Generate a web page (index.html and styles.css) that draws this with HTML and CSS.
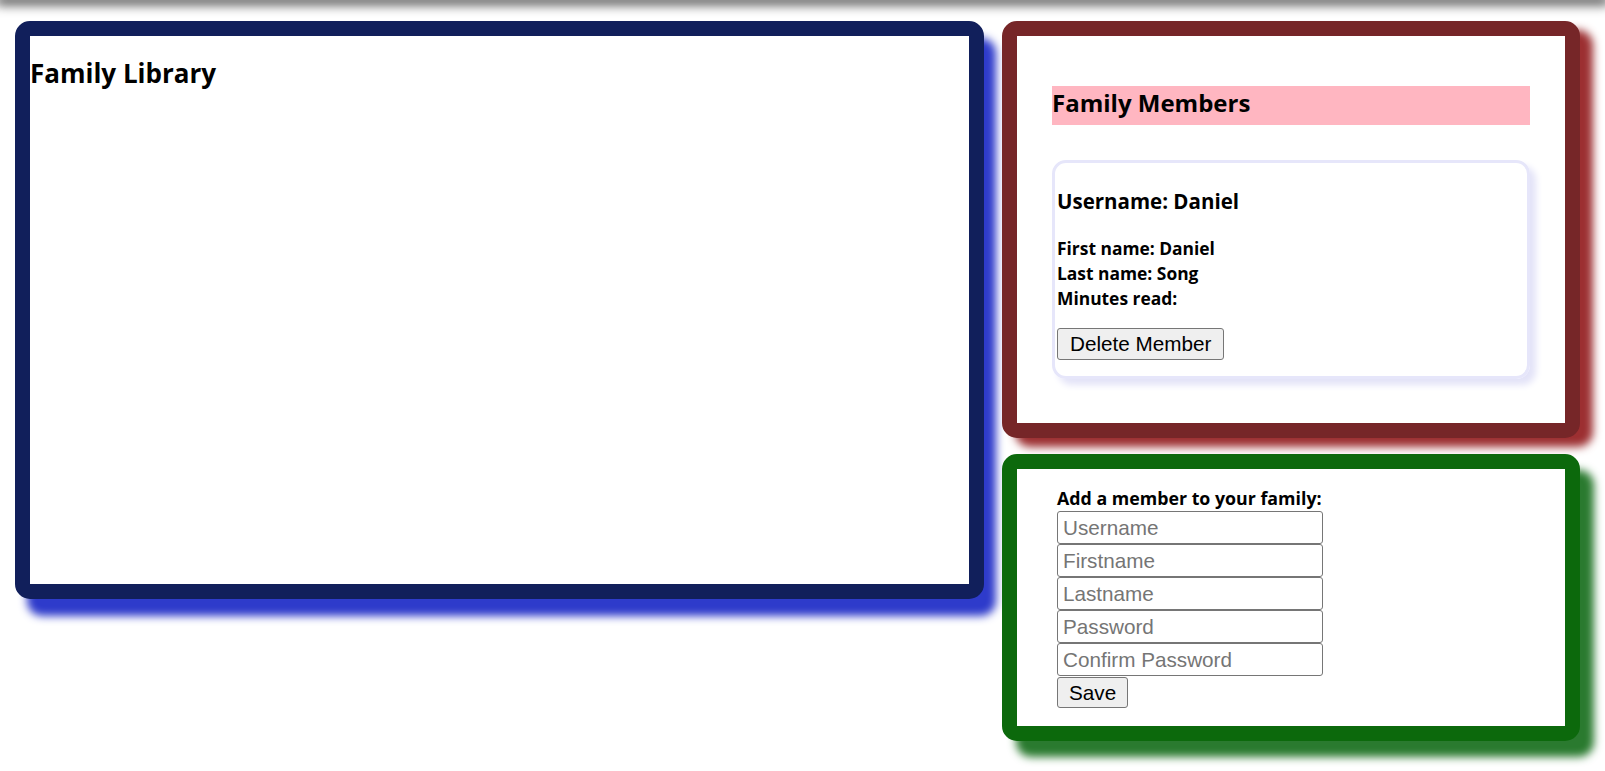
FILE: index.html
```html
<!DOCTYPE html>
<html lang="en">
<head>
<meta charset="utf-8">
<title>Family Library</title>
<link rel="stylesheet" href="styles.css">
</head>
<body>
<div class="topbar"></div>
<main class="layout">
  <section class="panel library">
    <h2 class="library-title">Family Library</h2>
  </section>
  <div class="side">
    <section class="panel members">
      <h2 class="members-title">Family Members</h2>
      <div class="member-card">
        <h3 class="member-username">Username: Daniel</h3>
        <p class="member-details">First name: Daniel<br>Last name: Song<br>Minutes read:</p>
        <button class="btn" type="button">Delete Member</button>
      </div>
    </section>
    <section class="panel add">
      <form class="add-form">
        <label class="add-label">Add a member to your family:</label>
        <input class="field" type="text" placeholder="Username">
        <input class="field" type="text" placeholder="Firstname">
        <input class="field" type="text" placeholder="Lastname">
        <input class="field" type="password" placeholder="Password">
        <input class="field" type="password" placeholder="Confirm Password">
        <button class="btn save" type="button">Save</button>
      </form>
    </section>
  </div>
</main>
</body>
</html>
```

FILE: styles.css
```css
* { box-sizing: border-box; }

html, body {
  min-height: 100vh;
}

body {
  margin: 0;
  background: #ffffff;
  font-family: "Open Sans", "Noto Sans", sans-serif;
  color: #000;
}

.topbar {
  height: 0;
  box-shadow: 0 0 12px 4px rgba(0, 0, 0, 0.85);
}

.layout {
  display: grid;
  grid-template-columns: 969px 578px;
  column-gap: 18px;
  align-items: start;
  padding: 21px 0 29px 15px;
}

.panel {
  border: 15px solid;
  border-radius: 15px;
  background: #fff;
}

.library {
  height: 578px;
  border-color: #111f5b;
  box-shadow: 12px 17px 8px #2e3bcb;
}

.library-title {
  margin: 20px 0 0;
  font-size: 26px;
  line-height: 34px;
  font-weight: 700;
}

.side {
  display: flex;
  flex-direction: column;
  gap: 16px;
}

.members {
  border-color: #762628;
  box-shadow: 13px 9px 8px #9c2f31;
  padding: 50px 35px 44px;
}

.members-title {
  margin: 0 0 35px;
  background: #ffb6c1;
  font-size: 24px;
  line-height: 34px;
  padding-bottom: 5px;
  font-weight: 700;
}

.member-card {
  border: 3px solid #e6e6fa;
  border-radius: 14px;
  box-shadow: 6px 6px 7px #e3e3f8;
  padding: 0 2px 16px;
}

.member-username {
  margin: 24px 0 0;
  font-size: 20.5px;
  line-height: 28px;
  font-weight: 700;
}

.member-details {
  margin: 21px 0 0;
  font-size: 17.4px;
  line-height: 25px;
  font-weight: 700;
}

.btn {
  display: block;
  margin-top: 17px;
  height: 32px;
  padding: 0 12px;
  font-family: "Liberation Sans", Arial, sans-serif;
  font-size: 20.7px;
  color: #000;
  background: #efefef;
  border: 1px solid #767676;
  border-radius: 3px;
}

.add {
  border-color: #0c690c;
  box-shadow: 14px 16px 8px #2a7a2f;
  padding: 17px 40px 18px;
}

.add-form {
  display: flex;
  flex-direction: column;
  align-items: flex-start;
}

.add-label {
  font-size: 17.8px;
  line-height: 25px;
  font-weight: 700;
}

.field {
  width: 266px;
  height: 33px;
  padding: 0 5px;
  font-family: "Liberation Sans", Arial, sans-serif;
  font-size: 20.7px;
  border: 1px solid #767676;
  border-radius: 3px;
  background: #fff;
}

.field::placeholder {
  color: #757575;
}

.btn.save {
  margin-top: 1px;
  height: 31px;
  padding: 0 11px;
}
```
